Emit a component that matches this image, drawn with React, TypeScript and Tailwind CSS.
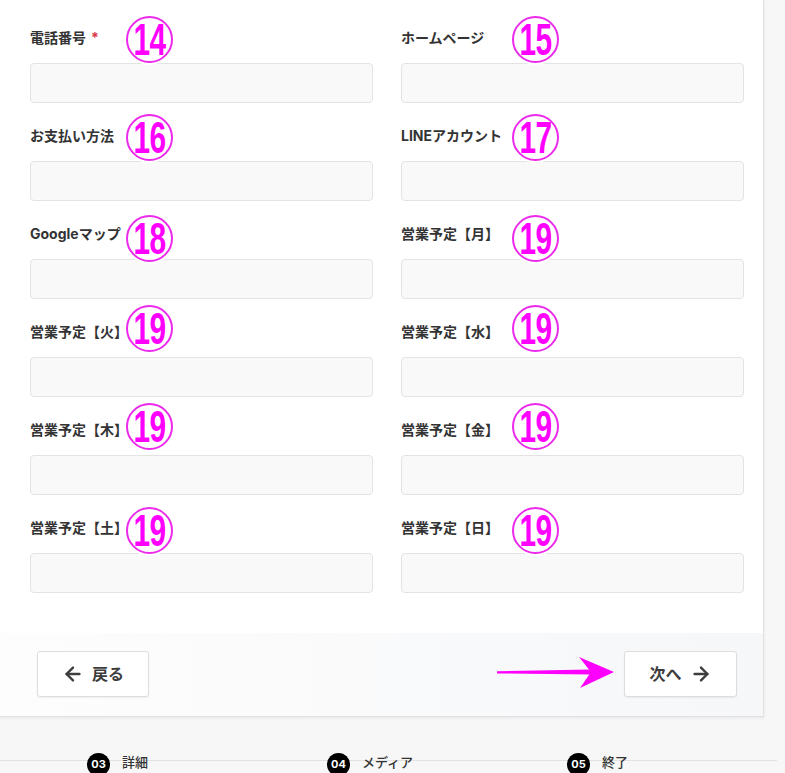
import { ArrowLeft, ArrowRight } from "lucide-react";

interface Field {
  label: string;
  required?: boolean;
  mark: string;
  markPos: string;
}

const rows: Field[][] = [
  [
    { label: "電話番号", required: true, mark: "14", markPos: "-top-[12px] left-[96px]" },
    { label: "ホームページ", mark: "15", markPos: "-top-[12px] left-[111px]" },
  ],
  [
    { label: "お支払い方法", mark: "16", markPos: "-top-[12px] left-[96px]" },
    { label: "LINEアカウント", mark: "17", markPos: "-top-[12px] left-[111px]" },
  ],
  [
    { label: "Googleマップ", mark: "18", markPos: "-top-[9px] left-[96px]" },
    { label: "営業予定【月】", mark: "19", markPos: "-top-[9px] left-[111px]" },
  ],
  [
    { label: "営業予定【火】", mark: "19", markPos: "-top-[17px] left-[96px]" },
    { label: "営業予定【水】", mark: "19", markPos: "-top-[17px] left-[111px]" },
  ],
  [
    { label: "営業予定【木】", mark: "19", markPos: "-top-[17px] left-[96px]" },
    { label: "営業予定【金】", mark: "19", markPos: "-top-[17px] left-[111px]" },
  ],
  [
    { label: "営業予定【土】", mark: "19", markPos: "-top-[11px] left-[96px]" },
    { label: "営業予定【日】", mark: "19", markPos: "-top-[11px] left-[111px]" },
  ],
];

const steps = [
  { no: "03", label: "詳細" },
  { no: "04", label: "メディア" },
  { no: "05", label: "終了" },
];

function Mark({ n, pos }: { n: string; pos: string }) {
  return (
    <div
      className={`absolute ${pos} w-[47px] h-[47px] rounded-full bg-white border-2 border-[#ec2aec] shadow-[0_0_0_2px_#ffffff] flex items-center justify-center overflow-hidden`}
    >
      <span className="font-['Liberation_Sans',Arial,sans-serif] font-bold text-[44px] leading-none text-[#ff00ff] scale-x-[0.68] tracking-[-1px]">
        {n}
      </span>
    </div>
  );
}

function FormField({ f }: { f: Field }) {
  return (
    <div className="relative">
      <div className="h-[20px] mb-[15px] flex items-center text-sm font-bold text-[#333333]">
        {f.label}
        {f.required && <span className="ml-[5px] text-[#dc3545]">*</span>}
      </div>
      <div className="h-[40px] w-full rounded-[4px] border border-[#e3e3e3] bg-[#f9f9f9]" />
      <Mark n={f.mark} pos={f.markPos} />
    </div>
  );
}

export default function App() {
  return (
    <div className="min-h-screen bg-[#f7f7f7] font-['Inter','Noto_Sans_CJK_JP',sans-serif] overflow-hidden">
      <div className="w-[764px] bg-white border-r border-b border-[#e1e1e1] shadow-[0_1px_3px_rgba(0,0,0,0.07)]">
        <div className="pt-[28px] pl-[30px] pr-[19px] pb-[40px] grid grid-cols-2 gap-x-[28px] gap-y-[23px]">
          {rows.flat().map((f, i) => (
            <FormField key={i} f={f} />
          ))}
        </div>

        <div className="relative flex items-center justify-between pt-[18px] pb-[19px] pl-[37px] pr-[26px] bg-linear-to-r from-[#fdfdfd] to-[#f6f7f9]">
          <button className="w-[112px] h-[46px] flex items-center justify-center gap-2 bg-white border border-[#dddddd] rounded-[3px] shadow-[0_1px_2px_rgba(0,0,0,0.06)] text-[16px] font-bold text-[#3d3d3d]">
            <ArrowLeft size={22} strokeWidth={2.6} />
            戻る
          </button>
          <button className="w-[113px] h-[46px] flex items-center justify-center gap-2 bg-white border border-[#dddddd] rounded-[3px] shadow-[0_1px_2px_rgba(0,0,0,0.06)] text-[16px] font-bold text-[#3d3d3d]">
            次へ
            <ArrowRight size={22} strokeWidth={2.6} />
          </button>
          <svg className="absolute top-[24px] left-[497px]" width="117" height="32" viewBox="0 0 117 32">
            <polygon points="0,14.2 94,12.6 94,17.4 0,16.4" fill="#ff00ff" />
            <polygon points="82,0 117,15 83,31 94,15" fill="#ff00ff" />
          </svg>
        </div>
      </div>

      <div className="relative mt-[36px] h-[40px]">
        <div className="absolute left-0 top-[7px] w-[777px] h-px bg-[#e2e2e2]" />
        <div className="relative flex pl-[87px]">
          {steps.map((s) => (
            <div key={s.no} className="w-[240px] shrink-0 flex items-center gap-[12px]">
              <div className="w-[23px] h-[23px] rounded-full bg-black text-white text-[11px] font-bold flex items-center justify-center">
                {s.no}
              </div>
              <span className="text-[13px] font-medium text-[#333333] -mt-[3px]">{s.label}</span>
            </div>
          ))}
        </div>
      </div>
    </div>
  );
}
